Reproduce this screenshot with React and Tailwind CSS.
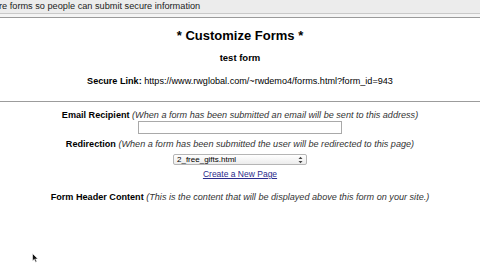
import React from 'react';

const Label = ({ title, note }) => (
    <p className="text-[9.1px] leading-[11px] text-black text-center whitespace-nowrap">
        <span className="font-bold">{title}</span>{' '}
        <span className="italic text-[#333]">{note}</span>
    </p>
);

const App = () => {
    return (
        <div className="relative w-[480px] h-[270px] overflow-hidden bg-white font-['Liberation_Sans',Arial,sans-serif]">
            <div className="h-[13px] bg-[#ececec] text-[9.2px] leading-[12px] text-[#222] -ml-[1px] whitespace-nowrap">
                re forms so people can submit secure information
            </div>
            <div className="h-[1px] bg-[#c9c9c9]"></div>
            <div className="h-[3px] bg-[#f4f4f4]"></div>
            <div className="h-[1px] bg-[#9a9a9a]"></div>

            <div className="flex flex-col items-center">
                <h1 className="mt-[10px] text-[13px] leading-[16px] font-bold text-black">* Customize Forms *</h1>
                <p className="mt-[8px] text-[9.5px] leading-[12px] font-bold text-black">test form</p>
                <p className="mt-[12px] text-[9.1px] leading-[11px] text-black whitespace-nowrap">
                    <span className="font-bold">Secure Link:</span> https://www.rwglobal.com/~rwdemo4/forms.html?form_id=943
                </p>
            </div>

            <div className="mt-[14px] h-[1px] bg-[#9c9c9c]"></div>

            <div className="flex flex-col items-center pt-[8px]">
                <Label title="Email Recipient" note="(When a form has been submitted an email will be sent to this address)" />
                <div className="mt-[0px] w-[204px] h-[13px] border border-[#a9a9a9] bg-white"></div>

                <div className="mt-[5px]">
                    <Label title="Redirection" note="(When a form has been submitted the user will be redirected to this page)" />
                </div>
                <div className="mt-[4px] w-[134px] h-[11px] border border-[#b5b5b5] rounded-[2px] bg-gradient-to-b from-white to-[#ececec] flex items-center justify-between px-[3px]">
                    <span className="text-[8px] leading-[9px] text-black">2_free_gifts.html</span>
                    <svg width="5" height="8" viewBox="0 0 5 8">
                        <path d="M0.5 3 L2.5 0.8 L4.5 3 Z M0.5 5 L2.5 7.2 L4.5 5 Z" fill="#444" />
                    </svg>
                </div>
                <a className="mt-[4px] text-[8.5px] leading-[11px] text-[#2b2b8c] underline">Create a New Page</a>

                <div className="mt-[12px]">
                    <Label title="Form Header Content" note="(This is the content that will be displayed above this form on your site.)" />
                </div>
            </div>

            <svg className="absolute left-[32px] top-[253px]" width="7" height="10" viewBox="0 0 7 10">
                <path d="M0.5 0.5 L0.5 8 L2.3 6.3 L3.6 9.3 L4.8 8.8 L3.6 5.9 L6 5.9 Z" fill="#111" stroke="#fff" strokeWidth="0.6" />
            </svg>
        </div>
    );
};

export default App;
